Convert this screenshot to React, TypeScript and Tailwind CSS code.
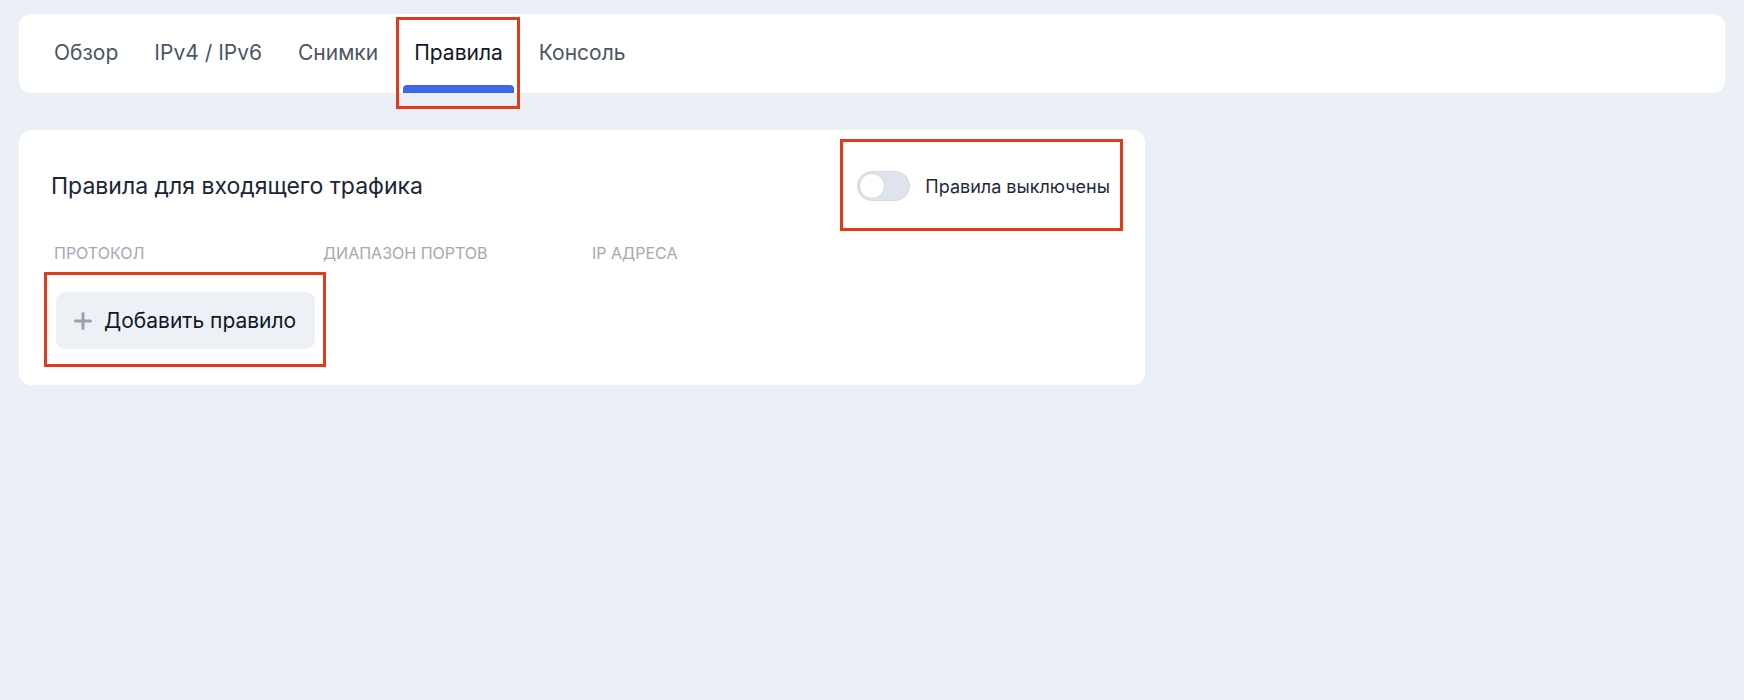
import React from "react";

const TABS = ["Обзор", "IPv4 / IPv6", "Снимки", "Правила", "Консоль"];
const ACTIVE = "Правила";
const COLUMNS = ["Протокол", "Диапазон портов", "IP адреса"];

function Highlight({ className }: { className: string }) {
  // red annotation frame drawn over the element
  return (
    <div
      className={`pointer-events-none absolute border-[3px] border-[#e5391c] ${className}`}
      aria-hidden="true"
    />
  );
}

function Tabs() {
  return (
    <div className="flex h-[79px] gap-[14px] rounded-[12px] bg-white px-[24px]">
      {TABS.map((tab) => {
        const isActive = tab === ACTIVE;
        return (
          <div key={tab} className="relative flex h-full flex-col">
            <div
              className={`flex flex-1 items-center px-[11px] pt-[7px] text-[21px] ${
                isActive ? "text-[#111827]" : "text-[#4b5565]"
              }`}
            >
              {tab}
            </div>
            <div
              className={`h-[8px] rounded-t-[4px] ${isActive ? "bg-[#3b68e6]" : "bg-transparent"}`}
            />
            {isActive && <Highlight className="-left-[7px] -right-[6px] top-[3px] -bottom-[16px]" />}
          </div>
        );
      })}
    </div>
  );
}

function Toggle() {
  return (
    <div className="relative flex items-center gap-[15px]">
      <div className="flex h-[30px] w-[53px] items-center rounded-full border border-[#d3d8e1] bg-[#dfe3ec] px-[1px]">
        <div className="h-[26px] w-[26px] rounded-full border border-[#d3d8e1] bg-white" />
      </div>
      <span className="text-[18px] text-[#1f2a3c]">Правила выключены</span>
      <Highlight className="-left-[17px] -right-[13px] -top-[32px] -bottom-[30px]" />
    </div>
  );
}

function AddRuleButton() {
  return (
    <div className="relative ml-[5px] w-fit">
      <button className="flex h-[57px] items-center gap-[12px] rounded-[9px] bg-[#edf1f6] pl-[18px] pr-[19px] text-[21px] text-[#111827]">
        <svg width="18" height="18" viewBox="0 0 18 18" className="text-[#9aa1ad]">
          <path d="M9 1.5v15M1.5 9h15" stroke="currentColor" strokeWidth="3" strokeLinecap="round" />
        </svg>
        Добавить правило
      </button>
      <Highlight className="-left-[12px] -right-[11px] -top-[20px] -bottom-[18px]" />
    </div>
  );
}

export default function App() {
  return (
    <div className="min-h-[700px] bg-[#ebf0f6] px-[19px] pt-[14px] font-['Inter','Noto_Sans',sans-serif]">
      <Tabs />

      <div className="mt-[37px] w-[1126px] rounded-[12px] bg-white px-[32px] pb-[36px] pt-[41px]">
        <div className="flex h-[30px] items-center justify-between pr-[3px]">
          <h2 className="text-[23px] text-[#1b2537]">Правила для входящего трафика</h2>
          <Toggle />
        </div>

        <div className="mt-[40px] grid grid-cols-[269px_269px_1fr] pl-[3px] text-[16px] uppercase leading-[24px] text-[#a3a9b3]">
          {COLUMNS.map((col) => (
            <div key={col}>{col}</div>
          ))}
        </div>

        <div className="mt-[27px]">
          <AddRuleButton />
        </div>
      </div>
    </div>
  );
}
